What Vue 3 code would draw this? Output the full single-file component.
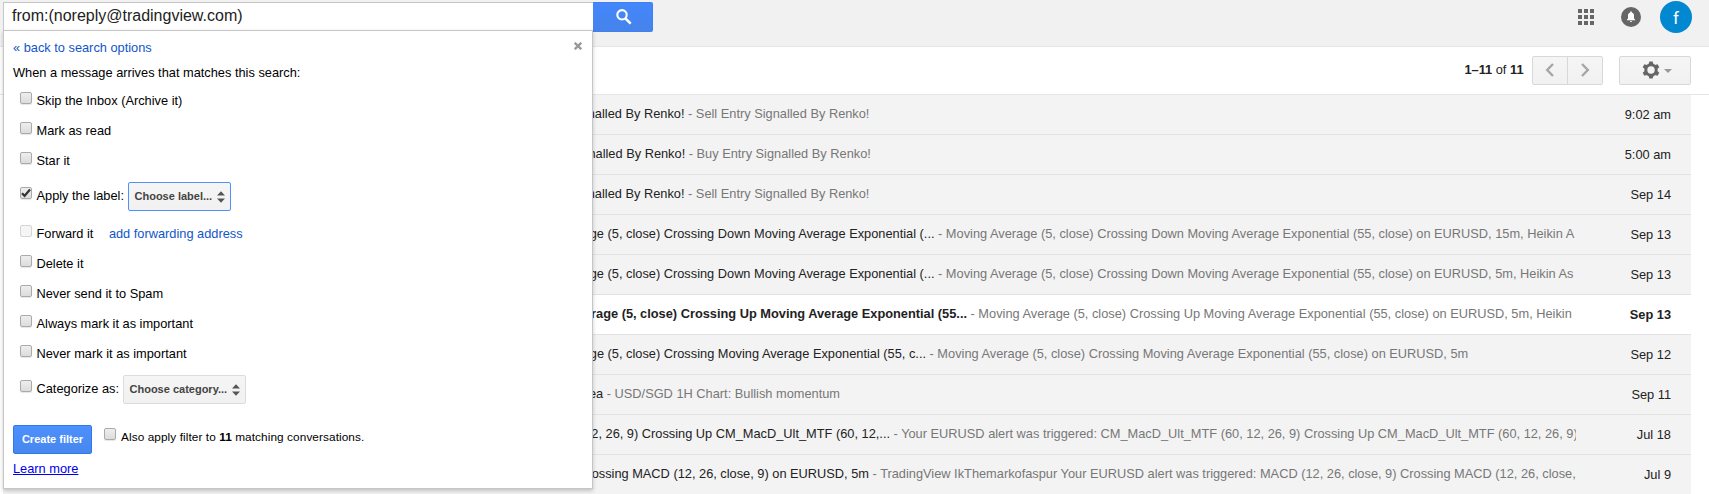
<script setup>
const actions = [
  { label: 'Skip the Inbox (Archive it)' },
  { label: 'Mark as read' },
  { label: 'Star it' },
  { label: 'Apply the label:', select: 'Choose label...', checked: true },
  { label: 'Forward it', link: 'add forwarding address', disabled: true },
  { label: 'Delete it' },
  { label: 'Never send it to Spam' },
  { label: 'Always mark it as important' },
  { label: 'Never mark it as important' },
  { label: 'Categorize as:', select: 'Choose category...' },
]
const mails = [
  { w: 91.5, s: 'nalled By Renko!', t: 'Sell Entry Signalled By Renko!', d: '9:02 am' },
  { w: 92.2, s: 'nalled By Renko!', t: 'Buy Entry Signalled By Renko!', d: '5:00 am' },
  { w: 91.5, s: 'nalled By Renko!', t: 'Sell Entry Signalled By Renko!', d: 'Sep 14' },
  { w: 341.5, s: 'ge (5, close) Crossing Down Moving Average Exponential (...', t: 'Moving Average (5, close) Crossing Down Moving Average Exponential (55, close) on EURUSD, 15m, Heikin A', d: 'Sep 13' },
  { w: 341.5, s: 'ge (5, close) Crossing Down Moving Average Exponential (...', t: 'Moving Average (5, close) Crossing Down Moving Average Exponential (55, close) on EURUSD, 5m, Heikin As', d: 'Sep 13' },
  { w: 374, s: 'rage (5, close) Crossing Up Moving Average Exponential (55...', t: 'Moving Average (5, close) Crossing Up Moving Average Exponential (55, close) on EURUSD, 5m, Heikin', d: 'Sep 13', unread: true },
  { w: 333, s: 'ge (5, close) Crossing Moving Average Exponential (55, c...', t: 'Moving Average (5, close) Crossing Moving Average Exponential (55, close) on EURUSD, 5m', d: 'Sep 12' },
  { w: 10.2, s: 'ea', t: 'USD/SGD 1H Chart: Bullish momentum', d: 'Sep 11' },
  { w: 297, s: '2, 26, 9) Crossing Up CM_MacD_Ult_MTF (60, 12,...', t: 'Your EURUSD alert was triggered: CM_MacD_Ult_MTF (60, 12, 26, 9) Crossing Up CM_MacD_Ult_MTF (60, 12, 26, 9)', d: 'Jul 18' },
  { w: 276, s: 'ossing MACD (12, 26, close, 9) on EURUSD, 5m', t: 'TradingView IkThemarkofaspur Your EURUSD alert was triggered: MACD (12, 26, close, 9) Crossing MACD (12, 26, close,', d: 'Jul 9' },
]
</script>

<template>
  <div class="app">
    <header class="top">
      <button class="search">
        <svg width="16" height="16" viewBox="0 0 16 16"><circle cx="6" cy="5.800" r="4.700" fill="none" stroke="#fff" stroke-width="2.100" /><path d="M9.300 9.300l5.400 5.400" stroke="#fff" stroke-width="2.600" /></svg>
      </button>
      <div class="tools">
        <svg width="16" height="16" viewBox="0 0 16 16" fill="#666"><path d="M0 0h4v4H0zM6 0h4v4H6zM12 0h4v4h-4zM0 6h4v4H0zM6 6h4v4H6zM12 6h4v4h-4zM0 12h4v4H0zM6 12h4v4H6zM12 12h4v4h-4z" /></svg>
        <span class="bell"><svg width="20" height="20" viewBox="0 0 20 20"><circle cx="10" cy="10" r="10" fill="#666" /><path d="M6 13.300v-.8l1-1V8.600c0-1.700.9-2.900 2.200-3.200v-.4a.8.8 0 0 1 1.600 0v.4c1.300.3 2.200 1.500 2.200 3.200v2.900l1 1v.8zM8.900 13.900h2.200a1.100 1.100 0 0 1-2.200 0z" fill="#fff" /></svg></span>
        <span class="avatar">f</span>
      </div>
    </header>
    <div class="bar">
      <span class="count"><b>1–11</b> of <b>11</b></span>
      <div class="pager">
        <span><svg width="10" height="14" viewBox="0 0 10 14"><path d="M8 1L2.200 7 8 13" fill="none" stroke="#a6a6a6" stroke-width="2.400" /></svg></span>
        <span><svg width="10" height="14" viewBox="0 0 10 14"><path d="M2 1L7.800 7 2 13" fill="none" stroke="#a6a6a6" stroke-width="2.400" /></svg></span>
      </div>
      <div class="gear">
        <svg width="18" height="18" viewBox="0 0 18 18"><g fill="#666"><path v-for="a in [0, 60, 120]" :key="a" :transform="`rotate(${a} 9 9)`" d="M6.800 3L7.300.4h3.400l.5 2.600v12l-.5 2.600H7.300L6.800 15z" /><circle cx="9" cy="9" r="6.700" /></g><circle cx="9" cy="9" r="3.700" fill="#f3f3f3" /></svg>
        <i></i>
      </div>
    </div>
    <main>
      <div v-for="(m, i) in mails" :key="i" class="row" :class="{ unread: m.unread }">
        <div class="text">
          <span class="subject" :style="{ width: m.w + 'px' }"><span>{{ m.s }}</span></span>
          <span class="snippet">&nbsp;- {{ m.t }}</span>
        </div>
        <span class="date">{{ m.d }}</span>
      </div>
    </main>

    <div class="overlay">
      <div class="query">from:(noreply@tradingview.com)</div>
      <section class="panel">
        <svg class="close" width="8" height="8" viewBox="0 0 8 8"><path d="M.7.700l6.600 6.600M7.300.7L.7 7.300" stroke="#999" stroke-width="2.300" /></svg>
        <a class="back">« back to search options</a>
        <p class="intro">When a message arrives that matches this search:</p>
        <div v-for="a in actions" :key="a.label" class="action" :class="{ tall: a.select, gap: a.link }">
          <span class="box" :class="{ off: a.disabled }"><svg v-if="a.checked" width="10" height="10" viewBox="0 0 10 10"><path d="M1 5.300l2.600 2.600L9 1.500" fill="none" stroke="#333" stroke-width="2.300" /></svg></span>
          <span class="label">{{ a.label }}</span>
          <span v-if="a.select" class="select" :class="{ focus: a.checked }">{{ a.select }}<svg width="8" height="12" viewBox="0 0 8 12" fill="#555"><path d="M0 4.500L4 .2l4 4.300zM0 7.500h8L4 11.800z" /></svg></span>
          <a v-if="a.link" class="fwd">{{ a.link }}</a>
        </div>
        <div class="submit">
          <button class="create">Create filter</button>
          <span class="box"></span>
          <span class="also">Also apply filter to <b>11</b> matching conversations.</span>
        </div>
        <a class="learn">Learn more</a>
      </section>
    </div>
  </div>
</template>

<style>
body { background: #fff; overflow: hidden; }
</style>
<style scoped>
* { box-sizing: border-box; }
.app { position: relative; height: 494px; overflow: hidden; font: 12.8px/16px "Liberation Sans", Arial, sans-serif; color: #222; }
.top { height: 47px; background: #f1f1f1; border-bottom: 1px solid #e5e5e5; display: flex; justify-content: space-between; padding: 1px 17px 0 593px; }
.search { width: 60px; height: 30px; margin-top: 1px; padding: 0 0 0 22.5px; border: 1px solid #4080ef; border-left: 0; border-radius: 0 2px 2px 0; background: linear-gradient(#4387fd, #4683ea); display: flex; align-items: center; }
.tools { display: flex; height: 32px; align-items: center; }
.bell { margin: 0 19px 0 27px; height: 20px; }
.bell svg { display: block; }
.avatar { width: 32px; height: 32px; border-radius: 50%; background: #0288d1; color: #fff; font: 17px/34px Roboto, sans-serif; text-align: center; }
.bar { height: 48px; border-bottom: 1px solid #e5e5e5; display: flex; justify-content: flex-end; padding: 9px 18px 0 0; }
.count { margin: 6px 8.500px 0 0; }
.pager, .gear { height: 29px; border: 1px solid #d8d8d8; border-radius: 2px; background: linear-gradient(#f5f5f5, #f1f1f1); display: flex; }
.pager { width: 71px; margin-right: 16px; }
.pager span { flex: 1; display: flex; align-items: center; justify-content: center; padding-bottom: 1px; }
.pager span + span { border-left: 1px solid #d8d8d8; }
.gear { width: 72px; align-items: center; padding-left: 22px; }
.gear svg { margin-bottom: 1px; }
.gear i { border: 4px solid transparent; border-top-color: #999; border-bottom: 0; margin-left: 4px; }
main { margin: 0 18px 0 3px; }
.row { height: 40px; background: #f3f3f3; border-bottom: 1px solid #e2e2e2; display: flex; padding: 11px 20px 0 590px; }
.row:last-child { border-bottom: 0; }
.unread { background: #fff; }
.text { width: 983px; overflow: hidden; display: flex; white-space: nowrap; flex: none; }
.subject { display: flex; justify-content: flex-end; flex: none; }
.snippet { color: #777; flex: none; }
.date { margin: 1px 0 0 auto; }
.unread .subject, .unread .date { font-weight: bold; }
.overlay { position: absolute; left: 3px; top: 2px; width: 590px; }
.query { height: 29px; background: #fff; border: 1px solid #c6c6c6; border-right: 0; padding: 4px 8px; font-size: 16px; line-height: 18px; }
.panel { position: relative; height: 459px; margin-top: -1px; background: #fff; border: 1px solid #c6c6c6; box-shadow: 0 2px 4px rgba(0,0,0,.2); padding: 9px 9px 0; color: #000; }
.close { position: absolute; right: 10.500px; top: 11px; }
a { color: #15c; }
.back { display: block; }
.intro { margin: 9px 0 6px; }
.action { display: flex; align-items: center; height: 30px; padding-left: 7px; white-space: nowrap; }
.tall { height: 40px; }
.gap { margin-top: 3px; }
.box { width: 12px; height: 12px; flex: none; border: 1px solid #aaa; border-radius: 2px; background: linear-gradient(#eee, #dcdcdc); box-shadow: 0 1px 1px rgba(0,0,0,.1); margin: 0 4.500px 8px 0; }
.box svg { display: block; }
.off { border-color: #d5d5d5; background: #f5f5f5; box-shadow: none; }
.label, .fwd { padding-bottom: 3px; }
.select { margin: 0 0 1px 3.500px; height: 29px; border: 1px solid #dcdcdc; border-radius: 2px; background: linear-gradient(#f5f5f5, #f1f1f1); font: bold 11px/27px "Liberation Sans", Arial, sans-serif; color: #444; padding: 0 5px 0 6px; display: flex; align-items: center; gap: 5px; }
.focus { border-color: #4d90fe; }
.fwd { margin-left: 15.500px; }
.submit { display: flex; margin-top: 15px; height: 29px; font-size: 11.8px; letter-spacing: .085px; }
.create { width: 79px; height: 29px; padding: 0 0 2px; margin-right: 12px; border: 1px solid #3079ed; border-radius: 2px; background: linear-gradient(#4d90fe, #4787ed); color: #fff; font: bold 11px "Liberation Sans", Arial, sans-serif; }
.submit .box { margin: 3px 5px 0 0; }
.also { margin-top: 4px; }
.learn { display: block; margin-top: 7px; color: #00e; text-decoration: underline; }
</style>
